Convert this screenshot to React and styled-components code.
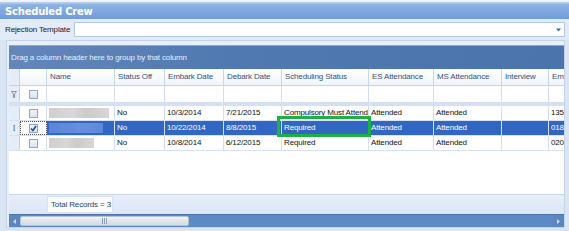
import React from 'react'
import styled, { createGlobalStyle } from 'styled-components';

const GlobalStyle = createGlobalStyle`
  html, body {
    margin: 0;
    padding: 0;
    background: #dbe6f4;
  }
  body {
    font-family: "Liberation Sans", Arial, sans-serif;
  }
`;

const COLS = '11px 27px 68px 50px 59px 58px 87px 65px 68px 47px 17px';

const rows = [
  { blur: 60, status: 'No', embark: '10/3/2014', debark: '7/21/2015', sched: 'Compulsory Must Attend', es: 'Attended', ms: 'Attended', interview: '', eme: '1357' },
  { blur: 54, status: 'No', embark: '10/22/2014', debark: '8/8/2015', sched: 'Required', es: 'Attended', ms: 'Attended', interview: '', eme: '0188', selected: true },
  { blur: 45, status: 'No', embark: '10/8/2014', debark: '6/12/2015', sched: 'Required', es: 'Attended', ms: 'Attended', interview: '', eme: '0207' },
];

const headers = ['Name', 'Status Off', 'Embark Date', 'Debark Date', 'Scheduling Status', 'ES Attendance', 'MS Attendance', 'Interview', 'Eme'];

const Check = ({ checked }) => (
  <Box>
    {checked && (
      <svg width="7" height="7" viewBox="0 0 7 7">
        <path d="M1 3.5 L3 5.5 L6 1" fill="none" stroke="#1f4f9c" strokeWidth="1.6" />
      </svg>
    )}
  </Box>
);

const FilterIcon = () => (
  <svg width="6" height="7" viewBox="0 0 6 7">
    <path d="M0.5 0.5 H5.5 L3.6 3 V6.5 H2.4 V3 Z" fill="#e9eef6" stroke="#6d7f99" strokeWidth="0.8" />
  </svg>
);

const App = () => {
  return (
    <Window>
      <GlobalStyle />
      <TopStrip />
      <TitleBar>Scheduled Crew</TitleBar>
      <TemplateRow>
        <Label>Rejection Template</Label>
        <Combo>
          <svg width="5" height="4" viewBox="0 0 5 4">
            <path d="M0 0.5 H5 L2.5 3.5 Z" fill="#3d6aa8" />
          </svg>
        </Combo>
      </TemplateRow>
      <GridPanel>
        <GroupPanel>Drag a column header here to group by that column</GroupPanel>
        <HeaderRow>
          <IndicatorCell />
          <HeadCell />
          {headers.map(h => <HeadCell key={h}>{h}</HeadCell>)}
        </HeaderRow>
        <FilterRow>
          <IndicatorCell><FilterIcon /></IndicatorCell>
          <CheckCell><Check /></CheckCell>
          {headers.map(h => <Cell key={h} />)}
        </FilterRow>
        <Separator />
        {rows.map((r, i) => (
          <DataRow key={i} $selected={r.selected}>
            <IndicatorCell>{r.selected && <Caret>I</Caret>}</IndicatorCell>
            <CheckCell $focus={r.selected}><Check checked={r.selected} /></CheckCell>
            <Cell><Blur $selected={r.selected} style={{ width: r.blur }} /></Cell>
            <Cell>{r.status}</Cell>
            <Cell>{r.embark}</Cell>
            <Cell>{r.debark}</Cell>
            <Cell $highlight={r.selected}>{r.sched}</Cell>
            <Cell>{r.es}</Cell>
            <Cell>{r.ms}</Cell>
            <Cell>{r.interview}</Cell>
            <Cell>{r.eme}</Cell>
          </DataRow>
        ))}
        <Empty />
        <Footer>
          <FooterGap />
          <TotalBox>Total Records = 3</TotalBox>
        </Footer>
        <ScrollBar>
          <ScrollBtn>
            <svg width="3" height="5" viewBox="0 0 3 5"><path d="M3 0 V5 L0 2.5 Z" fill="#c9d8ee" /></svg>
          </ScrollBtn>
          <Thumb>
            <Grip />
          </Thumb>
          <Track />
          <ScrollBtn>
            <svg width="3" height="5" viewBox="0 0 3 5"><path d="M0 0 V5 L3 2.5 Z" fill="#c9d8ee" /></svg>
          </ScrollBtn>
        </ScrollBar>
      </GridPanel>
    </Window>
  );
};

export default App;

const Window = styled.div`
  width: 569px;
  height: 231px;
  overflow: hidden;
  display: flex;
  flex-direction: column;
  background: #dae5f4;
`;

const TopStrip = styled.div`
  height: 3px;
  background: #eef3fa;
  border-bottom: 1px solid #b9cce6;
  box-sizing: border-box;
`;

const TitleBar = styled.div`
  height: 16px;
  background: linear-gradient(#8fb3e4, #6f9cd9);
  border-top: 1px solid #a9c5ec;
  box-sizing: border-box;
  color: #fff;
  font-weight: bold;
  font-size: 10px;
  line-height: 15px;
  padding-left: 5px;
  font-family: "DejaVu Sans", Verdana, sans-serif;
  letter-spacing: -0.2px;
`;

const TemplateRow = styled.div`
  height: 21px;
  display: flex;
  align-items: center;
  padding: 0 4px 0 5px;
  background: #e2ebf7;
  gap: 4px;
`;

const Label = styled.div`
  font-size: 8px;
  letter-spacing: -0.15px;
  color: #1b1b1b;
  width: 65px;
  white-space: nowrap;
`;

const Combo = styled.div`
  flex: 1;
  height: 13px;
  background: #fff;
  border: 1px solid #b3c8e4;
  display: flex;
  align-items: center;
  justify-content: flex-end;
  padding-right: 3px;
`;

const GridPanel = styled.div`
  flex: 1;
  margin: 0 4px 3px 6px;
  padding: 4px 0 0 2px;
  border: 1px solid #c3d4ea;
  background: #e8eff8;
  display: flex;
  flex-direction: column;
  overflow: hidden;
  font-size: 8px;
  letter-spacing: -0.15px;
`;

const GroupPanel = styled.div`
  height: 24px;
  flex-shrink: 0;
  background: linear-gradient(100deg, #6487bb 0%, #5079b1 40%, #4b74ad 100%);
  border-top: 1px solid #8aa8d2;
  box-sizing: border-box;
  color: #e6eef9;
  font-size: 8px;
  padding: 7px 0 0 2px;
  white-space: nowrap;
`;

const Row = styled.div`
  display: grid;
  grid-template-columns: ${COLS};
  flex-shrink: 0;
  overflow: hidden;
`;

const HeaderRow = styled(Row)`
  height: 16px;
  background: linear-gradient(#ffffff, #f0f5fb);
  border-bottom: 1px solid #c3d4ea;
`;

const HeadCell = styled.div`
  border-right: 1px solid #c6d6ec;
  color: #3a5078;
  padding-left: 3px;
  line-height: 15px;
  white-space: nowrap;
  overflow: hidden;
`;

const IndicatorCell = styled.div`
  background: #e5edf8;
  border-right: 1px solid #c3d4ea;
  display: flex;
  align-items: center;
  justify-content: center;
`;

const FilterRow = styled(Row)`
  height: 16px;
  background: #fff;
  border-bottom: 1px solid #d3dff0;
`;

const Separator = styled.div`
  height: 3px;
  flex-shrink: 0;
  background: #d4e1f2;
`;

const DataRow = styled(Row)`
  height: 14px;
  background: ${p => (p.$selected ? '#3166c3' : '#fff')};
  color: ${p => (p.$selected ? '#fff' : '#111')};
  border-bottom: 1px solid #d6e2f2;
  overflow: visible;
  position: relative;
  z-index: ${p => (p.$selected ? 1 : 0)};
`;

const Cell = styled.div`
  border-right: 1px solid #d3dff0;
  padding-left: 2px;
  line-height: 14px;
  white-space: nowrap;
  overflow: ${p => (p.$highlight ? 'visible' : 'hidden')};
  display: flex;
  align-items: center;
  position: relative;

  &::after {
    content: '';
    display: ${p => (p.$highlight ? 'block' : 'none')};
    position: absolute;
    left: -5px;
    right: -3px;
    top: -5px;
    bottom: -2px;
    border: 3px solid #1eb045;
  }
`;

const CheckCell = styled.div`
  border-right: 1px solid #d3dff0;
  display: flex;
  align-items: center;
  justify-content: center;
  background: #fff;
  outline: ${p => (p.$focus ? '1px dotted #555' : 'none')};
  outline-offset: -1px;
`;

const Box = styled.div`
  width: 7px;
  height: 7px;
  border: 1px solid #8ea6c8;
  background: linear-gradient(#eef3fa, #d9e4f2);
  display: flex;
  align-items: center;
  justify-content: center;
`;

const Caret = styled.span`
  color: #4a5d80;
  font-size: 8px;
  font-family: "Liberation Serif", serif;
`;

const Blur = styled.div`
  height: 10px;
  background: ${p => (p.$selected
    ? 'linear-gradient(90deg, #5a86d8, #6790dc 60%, #5e89d8)'
    : 'linear-gradient(90deg, #cfcfcf, #d8d8d8 40%, #cbcbcb 60%, #d6d6d6)')};
`;

const Empty = styled.div`
  flex: 1;
  background: #fff;
`;

const Footer = styled.div`
  height: 19px;
  flex-shrink: 0;
  display: flex;
  align-items: center;
  background: linear-gradient(#e6eef9, #dbe6f5);
  border-top: 1px solid #c7d6ec;
`;

const FooterGap = styled.div`
  width: 38px;
`;

const TotalBox = styled.div`
  width: 66px;
  height: 17px;
  box-sizing: border-box;
  background: #fbfcfe;
  border: 1px solid #d6e2f2;
  color: #2e4470;
  font-size: 8px;
  line-height: 15px;
  padding-left: 3px;
  white-space: nowrap;
`;

const ScrollBar = styled.div`
  height: 12px;
  flex-shrink: 0;
  display: flex;
  background: #5d89c5;
  border-top: 1px solid #4b73ab;
`;

const ScrollBtn = styled.div`
  width: 11px;
  display: flex;
  align-items: center;
  justify-content: center;
  background: #5b86c2;
`;

const Thumb = styled.div`
  width: 167px;
  margin: 1px 0;
  border: 1px solid #b4c2d4;
  border-radius: 2px;
  background: linear-gradient(#f3f5f8, #dfe5ec 50%, #d3dbe5);
  display: flex;
  align-items: center;
  justify-content: center;
`;

const Grip = styled.div`
  width: 5px;
  height: 6px;
  background: repeating-linear-gradient(90deg, #8e9db3 0 1px, transparent 1px 2px);
`;

const Track = styled.div`
  flex: 1;
`;
